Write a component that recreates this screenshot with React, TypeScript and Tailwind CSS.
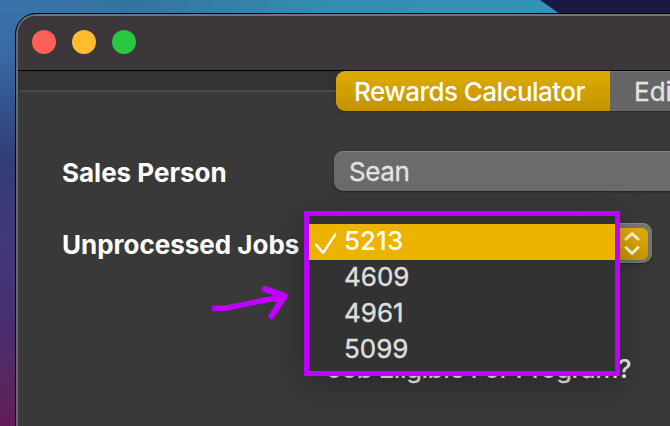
const jobs = ["4609", "4961", "5099"];

function TitleBar() {
  return (
    <div className="flex h-[55px] shrink-0 items-start gap-4 border-b border-black bg-[#3c373a] pl-[14px] pt-[14px]">
      <span className="size-6 rounded-full bg-[#ff5f57]" />
      <span className="size-6 rounded-full bg-[#febc2e]" />
      <span className="size-6 rounded-full bg-[#28c840]" />
    </div>
  );
}

function JobsMenu() {
  return (
    <div className="absolute left-[304px] top-[211px] h-[165px] w-[316px] border-[5px] border-[#bf00ff] bg-[#323232] pt-2 text-[26px] text-[#dfdfdf] shadow-[0_8px_34px_rgba(0,0,0,0.28)]">
      <div className="flex h-9 items-center bg-[#ecb300] font-medium text-white">
        <svg className="ml-[5px] mr-[7px]" width="23" height="26" viewBox="0 0 23 26" fill="none" stroke="white" strokeWidth="2.4" strokeLinecap="round" strokeLinejoin="round">
          <path d="M2.2 15.8 9.2 23.9 21.2 5.6" />
        </svg>
        <span className="relative -top-0.5">5213</span>
      </div>
      {jobs.map((job) => (
        <div key={job} className="flex h-9 items-center pl-[35px]">
          <span className="relative -top-0.5 [-webkit-text-stroke:0.4px_#dfdfdf]">{job}</span>
        </div>
      ))}
    </div>
  );
}

export default function App() {
  return (
    <div className="relative h-[426px] w-[670px] overflow-hidden bg-[linear-gradient(180deg,#3a72aa_0%,#386ba5_12%,#33508a_26%,#343d77_38%,#42387a_58%,#472f70_75%,#58265f_90%,#641d59_100%)] font-['Inter','Liberation_Sans',sans-serif]">
      <svg className="absolute left-0 top-0" width="670" height="14">
        <defs>
          <linearGradient id="sky">
            <stop offset="0" stopColor="#3a72aa" />
            <stop offset="0.25" stopColor="#34759f" />
            <stop offset="0.6" stopColor="#328eb2" />
            <stop offset="1" stopColor="#3394b8" />
          </linearGradient>
        </defs>
        <path d="M0 0H540L560 14H0Z" fill="url(#sky)" />
        <path d="M540 0H670V14H560Z" fill="#191a43" />
      </svg>
      <div className="relative ml-[15px] mt-[13px] h-[420px] w-[680px] overflow-hidden rounded-tl-[21px] border border-black bg-[#333]">
        <div className="flex h-full flex-col overflow-hidden rounded-tl-[20px] border-l-2 border-t-2 border-l-[#6a6a6a] border-t-[#757375]">
          <TitleBar />
        </div>
      </div>
      <main className="absolute left-[18px] top-[71px] flex h-[355px] w-[652px] flex-col">
        <div className="h-[19px] shrink-0 bg-[#333]" />
        <div className="flex-1 rounded-tl-[5px] border-t-2 border-t-[#494949] bg-[#393939]" />
        <div className="absolute left-[318px] top-0 flex h-10 w-[400px] overflow-hidden rounded-[9px] text-[26px] shadow-[0_1px_2px_rgba(0,0,0,0.3)]">
          <div className="flex w-[274px] items-center bg-linear-to-b from-[#dead02] to-[#c49300] pl-[18px] font-medium text-white">
            <span className="whitespace-nowrap tracking-[-0.55px]">Rewards Calculator</span>
          </div>
          <div className="flex flex-1 items-center border-t border-[#727272] bg-[#656565] pl-6 text-[#e3e3e3] [-webkit-text-stroke:0.3px_#e3e3e3]">Edit</div>
        </div>
        <div className="absolute left-[44px] top-20 flex h-10 items-center text-[26px] text-white">
          <label className="w-[272px] whitespace-nowrap pt-0.5 font-bold tracking-[-0.01px]">Sales Person</label>
          <div className="flex h-10 w-[400px] items-center rounded-[9px] border-t border-[#828282] bg-[#6b6b6b] pl-[15px] tracking-[-0.4px] text-[#e3e3e3] shadow-[0_1px_2px_rgba(0,0,0,0.4)] [-webkit-text-stroke:0.3px_#e3e3e3]">Sean</div>
        </div>
        <div className="absolute left-[44px] top-[152px] flex h-10 items-center text-[26px] text-white">
          <label className="w-[272px] whitespace-nowrap pt-0.5 font-bold tracking-[-0.01px]">Unprocessed Jobs</label>
          <div className="flex h-10 w-[318px] items-center justify-end rounded-[9px] border-t border-[#8b8b8b] bg-[#777] pr-1 shadow-[0_1px_2px_rgba(0,0,0,0.4)]">
            <div className="flex size-8 items-center justify-center rounded-[6px] bg-linear-to-b from-[#e2b000] to-[#c99700] shadow-sm">
              <svg width="20" height="26" viewBox="0 0 20 26" fill="none" stroke="#fff5d5" strokeWidth="3" strokeLinecap="round" strokeLinejoin="round">
                <path d="m4 8 6-5.5L16 8M4 16.5l6 6 6-6" />
              </svg>
            </div>
          </div>
        </div>
        <div className="absolute left-[309px] top-[282px] whitespace-nowrap text-[26px] font-medium leading-8 tracking-[-0.5px] text-[#ececec]">Job Eligible For Program?</div>
      </main>
      <JobsMenu />
      <svg className="absolute left-[208px] top-[280px]" width="86" height="44" viewBox="208 280 86 44" fill="none" stroke="#bf00ff" strokeWidth="5.5" strokeLinecap="square" strokeLinejoin="round">
        <path d="M215 308.5 227 308C238 305 262 301 282 297" />
        <path d="M265 289 284.5 296 271.5 316" strokeLinecap="round" strokeWidth="6.4" />
        <path d="M276 297.5 282 297" strokeWidth="9" strokeLinecap="round" />
      </svg>
    </div>
  );
}
